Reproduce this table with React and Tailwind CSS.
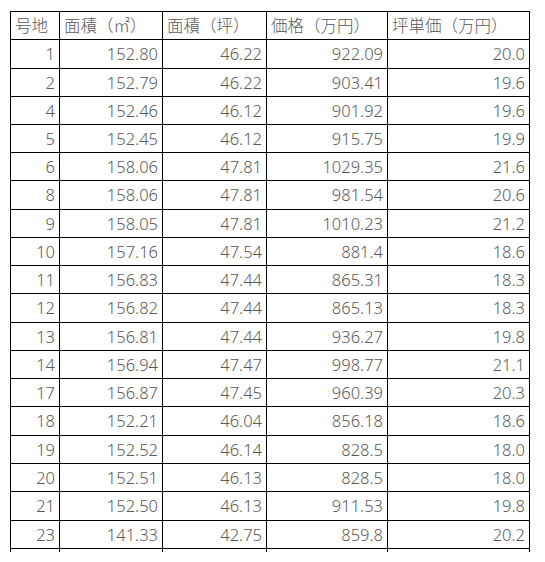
const rows = [
  ["1", "152.80", "46.22", "922.09", "20.0"],
  ["2", "152.79", "46.22", "903.41", "19.6"],
  ["4", "152.46", "46.12", "901.92", "19.6"],
  ["5", "152.45", "46.12", "915.75", "19.9"],
  ["6", "158.06", "47.81", "1029.35", "21.6"],
  ["8", "158.06", "47.81", "981.54", "20.6"],
  ["9", "158.05", "47.81", "1010.23", "21.2"],
  ["10", "157.16", "47.54", "881.4", "18.6"],
  ["11", "156.83", "47.44", "865.31", "18.3"],
  ["12", "156.82", "47.44", "865.13", "18.3"],
  ["13", "156.81", "47.44", "936.27", "19.8"],
  ["14", "156.94", "47.47", "998.77", "21.1"],
  ["17", "156.87", "47.45", "960.39", "20.3"],
  ["18", "152.21", "46.04", "856.18", "18.6"],
  ["19", "152.52", "46.14", "828.5", "18.0"],
  ["20", "152.51", "46.13", "828.5", "18.0"],
  ["21", "152.50", "46.13", "911.53", "19.8"],
  ["23", "141.33", "42.75", "859.8", "20.2"],
];

// rows that are one pixel taller, so the lines land where Excel put them
const tall = [1, 6, 10, 14, 17];

const headers = ["号地", "面積（㎡）", "面積（坪）", "価格（万円）", "坪単価（万円）"];

const cols = "grid grid-cols-[49px_103px_104px_121px_142px]";

function Row({ cells, index, header }) {
  return (
    <div
      className={`${cols} border-b border-black ${
        tall.includes(index) ? "h-[29px]" : "h-[28px]"
      }`}
    >
      {cells.map((c, i) => (
        <div
          key={i}
          className={`flex items-center border-r border-black ${
            header
              ? "justify-start pl-[4px] font-['Noto_Sans_CJK_JP',sans-serif]"
              : "justify-end pr-[4px] pt-[1px] font-['Noto_Sans',sans-serif]"
          }`}
        >
          {c}
        </div>
      ))}
    </div>
  );
}

export default function App() {
  return (
    <div className="min-h-[562px] w-[545px] bg-white pt-[11px] pl-[10px]">
      <div className="w-[520px] border-t border-l border-black text-[16.5px] font-light text-[#5a5a5a]">
        <Row cells={headers} index={0} header />
        {rows.map((r, i) => (
          <Row key={i} cells={r} index={i + 1} />
        ))}
      </div>
      <div className={`${cols} h-[3px] w-[520px] border-l border-black`}>
        {headers.map((_, i) => (
          <div key={i} className="border-r border-black" />
        ))}
      </div>
    </div>
  );
}
